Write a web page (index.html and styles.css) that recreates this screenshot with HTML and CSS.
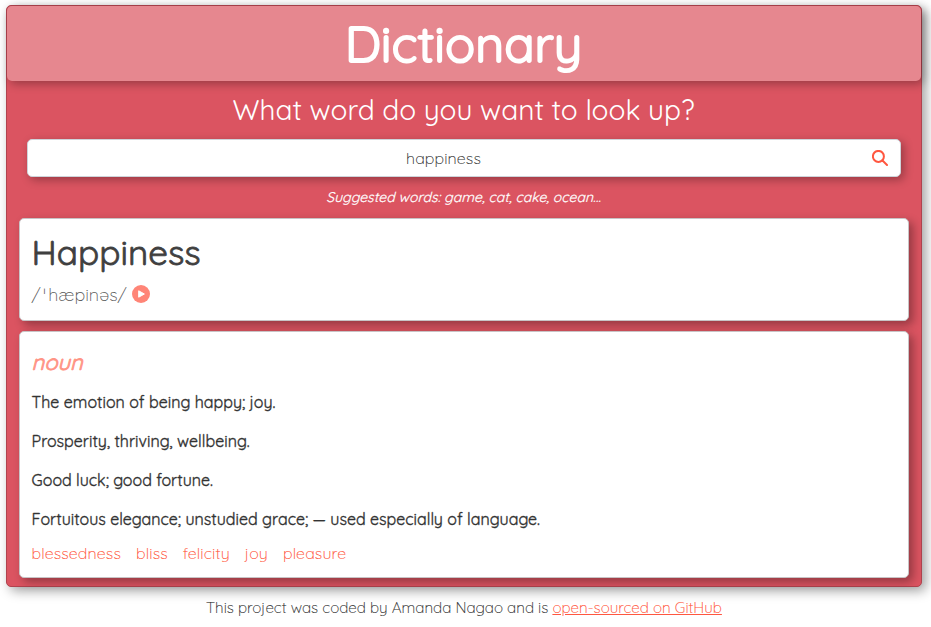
FILE: index.html
```html
<!DOCTYPE html>
<html lang="en">
<head>
<meta charset="utf-8">
<title>Dictionary</title>
<link rel="stylesheet" href="styles.css">
</head>
<body>
<div class="app">
  <header class="app-header"><h1>Dictionary</h1></header>
  <main>
    <h2 class="question">What word do you want to look up?</h2>
    <form class="search">
      <span class="search-input">happiness</span>
      <span class="search-button">
        <svg viewBox="0 0 16 16" width="16" height="16"><circle cx="6.4" cy="6.4" r="5.5"/><path d="M10.5 10.5L15 15"/></svg>
      </span>
    </form>
    <p class="hint">Suggested words: game, cat, cake, ocean...</p>
    <section class="card word">
      <h2>Happiness</h2>
      <div class="phonetic"><span>/<span class="stress">ˈ</span>hæpinəs/</span>
        <svg viewBox="0 0 18 18" width="18" height="18"><circle cx="9" cy="9" r="9"/><path d="M6.7 5.8v6.4L12.4 9z"/></svg>
      </div>
    </section>
    <section class="card meaning">
      <h3>noun</h3>
      <p class="d1">The emotion of being happy; joy.</p>
      <p class="d2">Prosperity, thriving, wellbeing.</p>
      <p class="d3">Good luck; good fortune.</p>
      <p class="d4">Fortuitous elegance; unstudied grace; — used especially of language.</p>
      <ul class="synonyms"><li>blessedness</li><li>bliss</li><li>felicity</li><li>joy</li><li>pleasure</li></ul>
    </section>
  </main>
</div>
<footer><span>This project was coded by Amanda Nagao and is </span><a href="#">open-sourced on GitHub</a></footer>
</body>
</html>
```
FILE: styles.css
```css
* { box-sizing: border-box; }
body { margin: 0; padding: 5px 9px 0 6px; background: #fff; color: #333; font: 300 16px/24px Quicksand, Lato, sans-serif; overflow: hidden; white-space: nowrap; }
h1, h2, h3, p, ul { margin: 0; padding: 0; }
.app { height: 582px; background: #db5461; border: 1px solid #b0434e; border-radius: 5px; box-shadow: 4px 4px 12px rgba(0,0,0,.37); }
.app-header { height: 75px; border-radius: 5px; background: #e6878f; box-shadow: 3px 3px 10px rgba(0,0,0,.3); text-align: center; color: #fff; }
h1 { padding-right: 1px; font-size: 50px; line-height: 76px; font-weight: 400; -webkit-text-stroke: 2px #fff; }
.question { margin-top: 10px; padding-right: 1px; line-height: 38px; font-size: 28px; font-weight: 400; color: #fff; text-align: center; }
.search { display: flex; align-items: center; margin: 10px 20px 0; height: 38px; background: #fff; border: 1px solid #ced4da; border-radius: 5px; box-shadow: 3px 3px 10px rgba(0,0,0,.3); }
.search-input { flex: 1; text-align: center; letter-spacing: .1px; color: #333; -webkit-text-stroke: .1px #333; }
.search-button { display: flex; width: 41px; padding-left: 13px; }
.search-button svg { fill: none; stroke: #ff5740; stroke-width: 2; stroke-linecap: round; }
.hint { margin-top: 8px; padding-right: 1px; line-height: 24px; font-size: 14px; font-weight: 400; font-style: italic; color: #fff; -webkit-text-stroke: .2px #fff; text-align: center; }
.card { margin: 0 12px; padding: 0 12px 0 11.6px; background: #fff; border: 1px solid #c8c4c6; border-radius: 5px; box-shadow: 4px 4px 10px rgba(0,0,0,.33); }
.word { height: 103px; margin-top: 9px; }
.word h2 { padding-top: 11px; font-size: 35px; line-height: 44px; font-weight: 400; color: #3f3f3f; -webkit-text-stroke: .8px #3f3f3f; }
.phonetic { display: flex; align-items: center; gap: 5.4px; margin-top: 8px; font-size: 18px; color: #555; }
.phonetic > span { padding-top: 1px; }
.phonetic svg { margin-bottom: 2px; }
.stress { margin: 0 2px; }
.phonetic circle { fill: #ff8577; }
.phonetic path { fill: #fff; stroke: #fff; stroke-linejoin: round; }
.meaning { height: 247px; margin-top: 10px; }
.meaning h3 { padding-top: 16px; font-size: 22px; line-height: 28px; font-weight: 400; font-style: italic; color: #ff9485; -webkit-text-stroke: .8px #ff9485; }
.meaning p { font-weight: 400; margin-bottom: 15px; -webkit-text-stroke: .35px #333; }
.meaning h3 + p { margin-top: 14px; }
.meaning .d4 { margin-bottom: 10px; }
.synonyms { display: flex; gap: 15px; list-style: none; color: #ff5740; letter-spacing: .12px; -webkit-text-stroke: .12px #ff5740; }
footer { margin-top: 9px; font-size: 15.2px; text-align: center; white-space: pre; -webkit-text-stroke: .12px; }
footer a { color: #ff5740; }
```
